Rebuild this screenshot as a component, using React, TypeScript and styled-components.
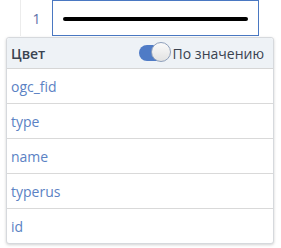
import styled, { createGlobalStyle } from "styled-components";

const Global = createGlobalStyle`
  body {
    margin: 0;
    background: #fff;
    font-family: "Open Sans", "Noto Sans", sans-serif;
  }
`;

const fields = ["ogc_fid", "type", "name", "typerus", "id"];

function App() {
  return (
    <>
      <Global />
      <Page>
        <TopRow>
          <IndexCell>1</IndexCell>
          <LineCell>
            <LineSample />
          </LineCell>
        </TopRow>
        <Panel>
          <Header>
            <HeaderTitle>Цвет</HeaderTitle>
            <ToggleWrap>
              <Track>
                <Knob />
              </Track>
              <ToggleLabel>По значению</ToggleLabel>
            </ToggleWrap>
          </Header>
          {fields.map((f) => (
            <Row key={f}>{f}</Row>
          ))}
        </Panel>
      </Page>
    </>
  );
}

export default App;

const Page = styled.div`
  position: relative;
  width: 281px;
  height: 248px;
  overflow: hidden;
`;

const TopRow = styled.div`
  display: flex;
  height: 36px;
  margin-left: 20px;
`;

const IndexCell = styled.div`
  width: 31px;
  border-left: 1px solid #ececec;
  display: flex;
  align-items: center;
  justify-content: center;
  font-size: 14px;
  color: #5a6fa8;
`;

const LineCell = styled.div`
  width: 207px;
  border: 1px solid #4a78c2;
  display: flex;
  align-items: center;
  padding: 0 10px;
  box-sizing: border-box;
  height: 36px;
`;

const LineSample = styled.div`
  flex: 1;
  height: 4px;
  border-radius: 2px;
  background: #000;
  margin-top: 1px;
`;

const Panel = styled.div`
  position: absolute;
  left: 6px;
  top: 37px;
  width: 268px;
  border: 1px solid #d6d9dd;
  border-radius: 3px;
  background: #fff;
  box-shadow: 0 1px 3px rgba(0, 0, 0, 0.18);
  box-sizing: border-box;
`;

const Header = styled.div`
  height: 30px;
  background: #eef2f6;
  border-bottom: 1px solid #d6d6d6;
  display: flex;
  align-items: center;
  justify-content: space-between;
  padding: 0 9px 0 4px;
  border-radius: 3px 3px 0 0;
`;

const HeaderTitle = styled.span`
  font-size: 14px;
  font-weight: 600;
  color: #3a4350;
`;

const ToggleWrap = styled.div`
  display: flex;
  align-items: center;
  gap: 4px;
`;

const Track = styled.div`
  position: relative;
  width: 30px;
  height: 16px;
  border-radius: 8px;
  background: #4f7bc6;
`;

const Knob = styled.div`
  position: absolute;
  right: -2px;
  top: -3px;
  width: 20px;
  height: 20px;
  box-sizing: border-box;
  border-radius: 50%;
  background: linear-gradient(#fafafa, #e2e2e2);
  border: 1px solid #8fa0bb;
`;

const ToggleLabel = styled.span`
  font-size: 14px;
  color: #3a4350;
`;

const Row = styled.div`
  height: 34px;
  display: flex;
  align-items: center;
  padding-left: 4px;
  font-size: 14px;
  color: #5b82c4;
  border-bottom: 1px solid #d9d9d9;
  &:last-child {
    border-bottom: none;
  }
`;
